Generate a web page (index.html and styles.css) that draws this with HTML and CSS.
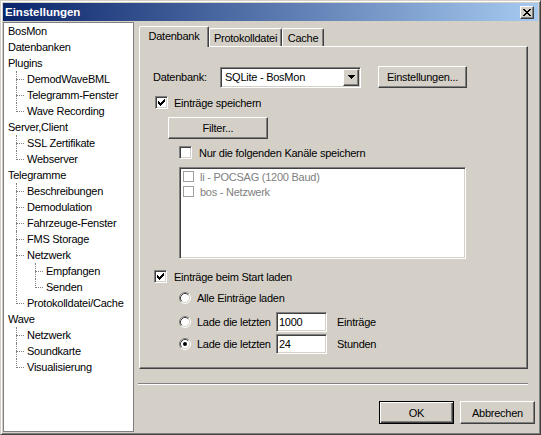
FILE: index.html
```html
<!DOCTYPE html>
<html lang="de">
<head>
<meta charset="utf-8">
<title>Einstellungen</title>
<link rel="stylesheet" href="styles.css">
</head>
<body>
<div class="window">
  <div class="titlebar">
    <span class="title">Einstellungen</span>
    <span class="close"><svg width="8" height="7" viewBox="0 0 8 7" shape-rendering="crispEdges"><path fill="#000" d="M0 0h2v1h-2z M6 0h2v1h-2z M1 1h2v1h-2z M5 1h2v1h-2z M2 2h4v1h-4z M3 3h2v1h-2z M2 4h4v1h-4z M1 5h2v1h-2z M5 5h2v1h-2z M0 6h2v1h-2z M6 6h2v1h-2z"/></svg></span>
  </div>
  <div class="client">
    <div class="tree">
      <ul>
        <li><span>BosMon</span></li>
        <li><span>Datenbanken</span></li>
        <li><span>Plugins</span>
          <ul>
            <li><span>DemodWaveBML</span></li>
            <li><span>Telegramm-Fenster</span></li>
            <li><span>Wave Recording</span></li>
          </ul>
        </li>
        <li><span>Server,Client</span>
          <ul>
            <li><span>SSL Zertifikate</span></li>
            <li><span>Webserver</span></li>
          </ul>
        </li>
        <li><span>Telegramme</span>
          <ul>
            <li><span>Beschreibungen</span></li>
            <li><span>Demodulation</span></li>
            <li><span>Fahrzeuge-Fenster</span></li>
            <li><span>FMS Storage</span></li>
            <li><span>Netzwerk</span>
              <ul>
                <li><span>Empfangen</span></li>
                <li><span>Senden</span></li>
              </ul>
            </li>
            <li><span>Protokolldatei/Cache</span></li>
          </ul>
        </li>
        <li><span>Wave</span>
          <ul>
            <li><span>Netzwerk</span></li>
            <li><span>Soundkarte</span></li>
            <li><span>Visualisierung</span></li>
          </ul>
        </li>
      </ul>
    </div>
    <div class="main">
      <div class="tabs">
        <div class="tab active tab-db">Datenbank</div>
        <div class="tab tab-prot">Protokolldatei</div>
        <div class="tab tab-cache">Cache</div>
      </div>
      <div class="panel">
        <div class="row1">
          <span class="lbl">Datenbank:</span>
          <div class="combo sunken">
            <span class="combo-text">SQLite - BosMon</span>
            <span class="arrow raised"><svg width="7" height="4" viewBox="0 0 7 4" shape-rendering="crispEdges"><path fill="#000" d="M0 0h7v1h-7z M1 1h5v1h-5z M2 2h3v1h-3z M3 3h1v1h-1z"/></svg></span>
          </div>
          <button class="btn btn-settings">Einstellungen...</button>
        </div>

        <div class="check-row cr1">
          <span class="cb sunken"><svg width="7" height="7" viewBox="0 0 7 7" shape-rendering="crispEdges"><path fill="#000" d="M0 2h1v3h-1z M1 3h1v3h-1z M2 4h1v3h-1z M3 3h1v3h-1z M4 2h1v3h-1z M5 1h1v3h-1z M6 0h1v3h-1z"/></svg></span>
          <span>Einträge speichern</span>
        </div>

        <button class="btn btn-filter">Filter...</button>

        <div class="check-row cr2">
          <span class="cb sunken"></span>
          <span>Nur die folgenden Kanäle speichern</span>
        </div>

        <div class="listbox sunken">
          <div class="li-item"><span class="li-cb"></span><span>li - POCSAG (1200 Baud)</span></div>
          <div class="li-item"><span class="li-cb"></span><span>bos - Netzwerk</span></div>
        </div>

        <div class="check-row cr3">
          <span class="cb sunken"><svg width="7" height="7" viewBox="0 0 7 7" shape-rendering="crispEdges"><path fill="#000" d="M0 2h1v3h-1z M1 3h1v3h-1z M2 4h1v3h-1z M3 3h1v3h-1z M4 2h1v3h-1z M5 1h1v3h-1z M6 0h1v3h-1z"/></svg></span>
          <span>Einträge beim Start laden</span>
        </div>

        <div class="radio-row rr1">
          <svg class="radio" width="12" height="12" viewBox="0 0 12 12">
            <circle cx="6" cy="6" r="5" fill="#fff"/>
            <path d="M2.11 9.89 A5.5 5.5 0 0 1 9.89 2.11" fill="none" stroke="#808080"/>
            <path d="M9.89 2.11 A5.5 5.5 0 0 1 2.11 9.89" fill="none" stroke="#fff"/>
            <path d="M2.82 9.18 A4.5 4.5 0 0 1 9.18 2.82" fill="none" stroke="#404040"/>
            <path d="M9.18 2.82 A4.5 4.5 0 0 1 2.82 9.18" fill="none" stroke="#D4D0C8"/>
          </svg>
          <span class="rtext">Alle Einträge laden</span>
        </div>

        <div class="radio-row rr2">
          <svg class="radio" width="12" height="12" viewBox="0 0 12 12">
            <circle cx="6" cy="6" r="5" fill="#fff"/>
            <path d="M2.11 9.89 A5.5 5.5 0 0 1 9.89 2.11" fill="none" stroke="#808080"/>
            <path d="M9.89 2.11 A5.5 5.5 0 0 1 2.11 9.89" fill="none" stroke="#fff"/>
            <path d="M2.82 9.18 A4.5 4.5 0 0 1 9.18 2.82" fill="none" stroke="#404040"/>
            <path d="M9.18 2.82 A4.5 4.5 0 0 1 2.82 9.18" fill="none" stroke="#D4D0C8"/>
          </svg>
          <span class="rtext rlabel">Lade die letzten</span>
          <div class="num sunken">1000</div>
          <span class="unit">Einträge</span>
        </div>

        <div class="radio-row rr3">
          <svg class="radio" width="12" height="12" viewBox="0 0 12 12">
            <circle cx="6" cy="6" r="5" fill="#fff"/>
            <path d="M2.11 9.89 A5.5 5.5 0 0 1 9.89 2.11" fill="none" stroke="#808080"/>
            <path d="M9.89 2.11 A5.5 5.5 0 0 1 2.11 9.89" fill="none" stroke="#fff"/>
            <path d="M2.82 9.18 A4.5 4.5 0 0 1 9.18 2.82" fill="none" stroke="#404040"/>
            <path d="M9.18 2.82 A4.5 4.5 0 0 1 2.82 9.18" fill="none" stroke="#D4D0C8"/>
            <circle cx="6" cy="6" r="2" fill="#000"/>
          </svg>
          <span class="rtext rlabel">Lade die letzten</span>
          <div class="num sunken">24</div>
          <span class="unit">Stunden</span>
        </div>
      </div>
      <div class="sep"></div>
      <div class="btns">
        <button class="btn btn-ok">OK</button>
        <button class="btn btn-cancel">Abbrechen</button>
      </div>
    </div>
  </div>
</div>
</body>
</html>
```

FILE: styles.css
```css
* { box-sizing: border-box; }
html, body { margin: 0; padding: 0; }
body {
  width: 541px;
  height: 435px;
  overflow: hidden;
  background: #D4D0C8;
  font-family: "Liberation Sans", Arial, sans-serif;
  font-size: 11px;
  letter-spacing: -0.25px;
  color: #000;
}

.window {
  width: 541px;
  height: 435px;
  border: 1px solid;
  border-color: #D4D0C8 #404040 #404040 #D4D0C8;
  box-shadow: inset 1px 1px #fff, inset -1px -1px #808080;
  padding: 2px;
  display: flex;
  flex-direction: column;
  background: #D4D0C8;
}

.titlebar {
  height: 18px;
  flex: none;
  background: linear-gradient(to right, #0A246A, #A6CAF0);
  display: flex;
  align-items: center;
  justify-content: space-between;
  padding: 0 4px 0 2px;
}
.title {
  color: #fff;
  font-weight: bold;
  font-size: 11.5px;
  letter-spacing: 0;
}
.close {
  width: 14px;
  height: 13px;
  margin-top: 1px;
  background: #D4D0C8;
  border: 1px solid;
  border-color: #fff #404040 #404040 #fff;
  box-shadow: inset -1px -1px #808080;
  display: flex;
  align-items: center;
  justify-content: center;
}
.close svg { display: block; }

.client {
  flex: 1;
  display: flex;
  margin-top: 1px;
  min-height: 0;
}

/* Tree */
.tree {
  width: 131px;
  flex: none;
  background: #fff;
  border: 1px solid #808080;
  overflow: hidden;
}
.tree ul {
  list-style: none;
  margin: 0;
  padding: 0;
}
.tree > ul { padding-left: 2px; }
.tree ul ul { padding-left: 19px; }
.tree li { position: relative; }
.tree li > span {
  display: block;
  height: 16px;
  line-height: 16px;
  padding: 0 2px;
  white-space: nowrap;
}
.tree ul ul > li::before {
  content: "";
  position: absolute;
  left: -9px;
  top: 8px;
  width: 8px;
  border-top: 1px dotted #808080;
}
.tree ul ul > li::after {
  content: "";
  position: absolute;
  left: -9px;
  top: 0;
  bottom: 0;
  border-left: 1px dotted #808080;
}
.tree ul ul > li:last-child::after {
  bottom: auto;
  height: 9px;
}

/* Main area */
.main {
  flex: 1;
  display: flex;
  flex-direction: column;
  padding-top: 4px;
}

.tabs {
  display: flex;
  align-items: flex-end;
  height: 20px;
  margin-left: 5px;
  flex: none;
}
.tab {
  height: 18px;
  border: 1px solid;
  border-bottom: none;
  border-color: #fff #404040 transparent #fff;
  box-shadow: inset -1px 0 #808080;
  border-radius: 2px 2px 0 0;
  display: flex;
  align-items: center;
  justify-content: center;
  background: #D4D0C8;
  white-space: nowrap;
}
.tab.active {
  height: 21px;
  position: relative;
  z-index: 1;
  margin-bottom: -1px;
  padding-bottom: 2px;
}
.tab-db { width: 70px; }
.tab-prot { width: 73px; }
.tab-cache { width: 42px; }

.panel {
  width: 389px;
  height: 323px;
  flex: none;
  margin-left: 5px;
  border: 1px solid;
  border-color: #fff #404040 #404040 #fff;
  box-shadow: inset -1px -1px #808080;
  padding: 19px 0 0 13px;
  display: flex;
  flex-direction: column;
  align-items: flex-start;
}

.sunken {
  border: 1px solid;
  border-color: #808080 #fff #fff #808080;
  box-shadow: inset 1px 1px #404040, inset -1px -1px #D4D0C8;
  background: #fff;
}
.raised {
  background: #D4D0C8;
  border: 1px solid;
  border-color: #fff #404040 #404040 #fff;
  box-shadow: inset -1px -1px #808080;
}

.btn {
  font-family: inherit;
  font-size: 11px;
  letter-spacing: -0.25px;
  color: #000;
  background: #D4D0C8;
  border: 1px solid;
  border-color: #fff #404040 #404040 #fff;
  box-shadow: inset -1px -1px #808080;
  padding: 0;
  margin: 0;
  display: flex;
  align-items: center;
  justify-content: center;
}

.row1 {
  display: flex;
  align-items: center;
  height: 22px;
}
.lbl { width: 67px; }
.combo {
  width: 141px;
  height: 21px;
  display: flex;
  align-items: center;
  justify-content: space-between;
  padding-left: 4px;
}
.arrow {
  width: 16px;
  height: 17px;
  margin-right: 1px;
  display: flex;
  align-items: center;
  justify-content: center;
}
.arrow svg { display: block; }
.btn-settings {
  margin-left: 17px;
  width: 89px;
  height: 22px;
}

.check-row {
  display: flex;
  align-items: center;
  gap: 6px;
  height: 13px;
}
.cb {
  width: 13px;
  height: 13px;
  flex: none;
  display: flex;
  align-items: center;
  justify-content: center;
}
.cb svg { display: block; }
.cr1 { margin-top: 8px; margin-left: 2px; }
.btn-filter {
  margin-top: 8px;
  margin-left: 15px;
  width: 100px;
  height: 22px;
}
.cr2 { margin-top: 7px; margin-left: 26px; gap: 7px; }

.listbox {
  margin-top: 8px;
  margin-left: 26px;
  width: 287px;
  height: 92px;
  padding: 1px 0 0 3px;
}
.li-item {
  display: flex;
  align-items: center;
  gap: 6px;
  height: 15px;
  color: #808080;
}
.li-cb {
  width: 11px;
  height: 11px;
  border: 1px solid #a0a0a0;
  background: #fff;
  flex: none;
}

.cr3 { margin-top: 11px; margin-left: 1px; gap: 7px; }

.radio-row {
  display: flex;
  align-items: center;
  height: 20px;
  margin-left: 26px;
}
.radio { display: block; flex: none; }
.rtext { margin-left: 6px; }
.rlabel { width: 79px; }
.rr1 { margin-top: 5px; }
.rr2 { margin-top: 4px; }
.rr3 { margin-top: 2px; }
.num {
  width: 51px;
  height: 20px;
  padding-left: 2px;
  display: flex;
  align-items: center;
}
.unit { margin-left: 10px; }

.sep {
  margin: 14px 0 0 4px;
  width: 390px;
  height: 2px;
  border-top: 1px solid #808080;
  border-bottom: 1px solid #fff;
  flex: none;
}

.btns {
  display: flex;
  justify-content: flex-end;
  gap: 6px;
  margin-top: 16px;
  padding-right: 3px;
}
.btns .btn {
  width: 75px;
  height: 23px;
}
.btn-ok {
  border: 1px solid #000;
  box-shadow: inset 1px 1px #fff, inset -1px -1px #404040, inset -2px -2px #808080;
}
```
